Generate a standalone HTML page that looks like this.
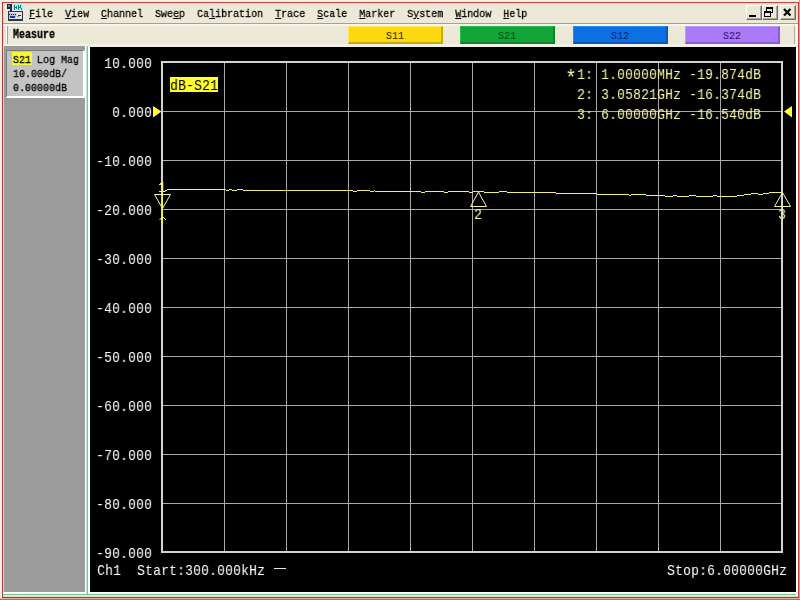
<!DOCTYPE html>
<html lang="en">
<head>
<meta charset="utf-8">
<title>Network Analyzer</title>
<style>
html,body{margin:0;padding:0;}
body{width:800px;height:600px;overflow:hidden;position:relative;background:#ece9d8;
  font-family:"Liberation Mono","DejaVu Sans Mono",monospace;}
.abs{position:absolute;}
.t12,.t16{will-change:transform;}
/* outer frame */
#frameouter{left:0;top:0;width:800px;height:600px;background:#f3f0e2;}
#framered{left:2px;top:2px;width:795px;height:594px;border:1px solid #c24545;border-bottom:2px solid #a43232;border-left-color:#a83a3a;background:#ece9d8;box-shadow:inset 0 0 2px 1px rgba(255,170,170,0.4);}
#edge-r{left:799px;top:0;width:1px;height:600px;background:#f28c8c;}
#edge-b1{left:0;top:598px;width:800px;height:1px;background:#d9b9a8;}
#edge-b2{left:0;top:599px;width:800px;height:1px;background:#8f7f60;}
/* menu */
.t12{font-size:11.5px;line-height:12px;white-space:pre;color:#000;-webkit-text-stroke:0.3px currentColor;transform:scaleX(0.8696);transform-origin:0 0;}
.t16{font-size:15px;line-height:16px;white-space:pre;transform:scaleX(0.8889);transform-origin:0 0;}
#menu{left:29px;top:8px;height:12px;}
#menu u{text-decoration:underline;text-decoration-thickness:1px;text-underline-offset:1px;}
#sep1{left:3px;top:23px;width:795px;height:1px;background:#a5a191;}
#sep2{left:3px;top:24px;width:795px;height:2px;background:#f8f6ec;}
#sep3{left:3px;top:44px;width:795px;height:3px;background:#f4f2e7;}
#grip1{left:6px;top:26px;width:1px;height:18px;background:#fff;}
#grip2{left:7px;top:26px;width:1px;height:18px;background:#a5a293;}
#tbend{left:794px;top:26px;width:1px;height:18px;background:#b3b09e;}
#measure{left:13px;top:29px;font-weight:bold;font-size:12.5px;transform:scaleX(0.8);}
.btn{top:26px;width:95px;height:18px;box-sizing:border-box;border-style:solid;border-width:1px 2px 2px 1px;}
.bt{top:30px;-webkit-text-stroke:0.1px currentColor;}
/* window buttons */
.wb{top:5px;width:16px;height:15px;box-sizing:border-box;background:#ece9d8;border:1px solid;border-color:#fff #716f64 #716f64 #fff;box-shadow:inset -1px -1px 0 #aca899;}
/* left panel */
#lpanel{left:4px;top:46px;width:81px;height:546px;background:#9b9b9b;}
#lbox{left:6px;top:50px;width:79px;height:48px;box-sizing:border-box;background:#c3c3c3;border-style:solid;border-width:1px 2px 2px 1px;border-color:#7d7d7d #fff #fff #7d7d7d;}
#lwhite{left:85px;top:46px;width:5px;height:550px;background:#fbfffb;}
#lgreen{left:86px;top:46px;width:1px;height:549px;background:#b4ecd0;}
#lgreen2{left:87px;top:46px;width:1px;height:549px;background:#72cc9c;}
#bwhite{left:3px;top:592px;width:795px;height:4px;background:#fbfffb;}
#bgreen{left:3px;top:594px;width:793px;height:1px;background:#72c696;}
#bgreen2{left:3px;top:595px;width:793px;height:1px;background:#d4f0d8;}
#rwhite{left:796px;top:24px;width:2px;height:572px;background:#fbfaf3;}
.w{color:#fff;}
.y{color:#f7f7a4;}
#plot{left:90px;top:47px;width:706px;height:545px;background:#000;}
</style>
</head>
<body>
<div class="abs" id="frameouter"></div>
<div class="abs" id="framered"></div>
<div class="abs" id="edge-r"></div>
<div class="abs" id="edge-b1"></div>
<div class="abs" id="edge-b2"></div>

<!-- app icon -->
<svg class="abs" style="left:7px;top:4px" width="17" height="17" viewBox="0 0 17 17" shape-rendering="crispEdges">
  <rect x="0" y="0" width="5" height="5" fill="#1a2348"/>
  <rect x="1" y="1" width="2" height="2" fill="#7d8db0"/>
  <rect x="3" y="3" width="2" height="4" fill="#1d2a5c"/>
  <rect x="6" y="0" width="10" height="6" fill="#a8f0f0"/>
  <g fill="#0c7f86">
    <rect x="7" y="1" width="1" height="5"/><rect x="9" y="2" width="1" height="3"/><rect x="8" y="3" width="1" height="1"/>
    <rect x="11" y="1" width="1" height="5"/><rect x="13" y="1" width="1" height="2"/><rect x="12" y="3" width="2" height="1"/><rect x="14" y="4" width="1" height="2"/>
  </g>
  <rect x="1" y="7" width="15" height="10" fill="#33363c"/>
  <rect x="2" y="8" width="13" height="7" fill="#dfe2ea"/>
  <rect x="2" y="9" width="7" height="5" fill="#b9bdf0"/>
  <path d="M2 10h1v1h-1zM4 10h1v1h-1zM6 10h1v1h-1zM8 10h1v1h-1z" fill="#23264a"/>
  <rect x="3" y="12" width="5" height="2" fill="#2236b0"/>
  <rect x="11" y="11" width="3" height="1" fill="#2c3a40"/>
  <rect x="10" y="12" width="2" height="1" fill="#8ea4a0"/>
</svg>

<div class="abs t12" id="menu"><u>F</u>ile  <u>V</u>iew  <u>C</u>hannel  Swe<u>e</u>p  Ca<u>l</u>ibration  <u>T</u>race  <u>S</u>cale  <u>M</u>arker  S<u>y</u>stem  <u>W</u>indow  <u>H</u>elp</div>

<!-- window buttons -->
<div class="abs wb" style="left:746px"><svg width="14" height="13" viewBox="0 0 14 13" style="display:block" shape-rendering="crispEdges"><rect x="2" y="9" width="7" height="2" fill="#000"/></svg></div>
<div class="abs wb" style="left:762px"><svg width="14" height="13" viewBox="0 0 14 13" style="display:block" shape-rendering="crispEdges"><path d="M3 1h7v6h-2v-1h1v-3h-5v2h-1z" fill="#000"/><path d="M1 5h7v6h-7zM2 7v3h5v-3z" fill="#000" fill-rule="evenodd"/></svg></div>
<div class="abs wb" style="left:780px"><svg width="14" height="13" viewBox="0 0 14 13" style="display:block"><path d="M3 3l6.5 6.5M9.5 3l-6.5 6.5" stroke="#000" stroke-width="2.2" fill="none"/></svg></div>

<div class="abs" id="sep1"></div>
<div class="abs" id="sep2"></div>
<div class="abs" id="sep3"></div>
<div class="abs" id="grip1"></div>
<div class="abs" id="grip2"></div>
<div class="abs" id="tbend"></div>
<div class="abs t12" id="measure">Measure</div>

<div class="abs btn" style="left:348px;background:#ffd90f;border-color:#ffe860 #c9a800 #c9a800 #ffe860"></div>
<div class="abs t12 bt" style="left:386px;color:#241c00">S11</div>
<div class="abs btn" style="left:460px;background:#12a436;border-color:#2fb850 #0b8528 #0b8528 #2fb850"></div>
<div class="abs t12 bt" style="left:498px;color:#064d16">S21</div>
<div class="abs btn" style="left:573px;background:#0c70e2;border-color:#2e88ee #0a58bc #0a58bc #2e88ee"></div>
<div class="abs t12 bt" style="left:611px;color:#0a2370">S12</div>
<div class="abs btn" style="left:685px;background:#a97af7;border-color:#be98fb #8a5ed6 #8a5ed6 #be98fb"></div>
<div class="abs t12 bt" style="left:723px;color:#2e1270">S22</div>

<!-- left panel -->
<div class="abs" id="lpanel"></div>
<div class="abs" id="lbox"></div>
<div class="abs" style="left:12px;top:52px;width:20px;height:13px;background:#f7f73c"></div>
<div class="abs t12" style="left:13px;top:54px">S21 Log Mag</div>
<div class="abs t12" style="left:12.5px;top:68px">10.000dB/</div>
<div class="abs t12" style="left:12.5px;top:82px">0.00000dB</div>
<div class="abs" id="lwhite"></div>
<div class="abs" id="bwhite"></div>
<div class="abs" id="lgreen"></div>
<div class="abs" id="lgreen2"></div>
<div class="abs" id="bgreen"></div>
<div class="abs" id="bgreen2"></div>
<div class="abs" id="rwhite"></div>

<!-- plot -->
<div class="abs" id="plot"></div>
<svg class="abs" style="left:90px;top:47px" width="706" height="545" viewBox="90 47 706 545" id="plotsvg">
  <g id="grid" shape-rendering="crispEdges">
    <g fill="#a9a9a9">
      <rect x="224" y="62" width="1" height="490"/><rect x="286" y="62" width="1" height="490"/><rect x="348" y="62" width="1" height="490"/>
      <rect x="410" y="62" width="1" height="490"/><rect x="472" y="62" width="1" height="490"/><rect x="534" y="62" width="1" height="490"/>
      <rect x="596" y="62" width="1" height="490"/><rect x="658" y="62" width="1" height="490"/><rect x="720" y="62" width="1" height="490"/>
      <rect x="162" y="111" width="620" height="1"/><rect x="162" y="160" width="620" height="1"/><rect x="162" y="209" width="620" height="1"/>
      <rect x="162" y="258" width="620" height="1"/><rect x="162" y="307" width="620" height="1"/><rect x="162" y="356" width="620" height="1"/>
      <rect x="162" y="405" width="620" height="1"/><rect x="162" y="454" width="620" height="1"/><rect x="162" y="503" width="620" height="1"/>
    </g>
    <rect x="162" y="62" width="620" height="490" fill="none" stroke="#d2d2d2" stroke-width="2"/>
  </g>
  <g id="refmarks" fill="#ffff2e">
    <path d="M153 106L161.5 111.5L153 117.5Z"/>
    <path d="M792 106L784 111.5L792 117.5Z"/>
  </g>
  <g id="trace" shape-rendering="crispEdges">
    <path d="M162 183h1v41h-1zM160 183h2v1h-2zM160 191h3v1h-3z" fill="#f0f050"/>
    <path d="M159.5 220L162.5 216.5L166 220" fill="none" stroke="#f0f070" shape-rendering="auto"/>
    <path d="M163 191h2v1h-2zM165 190h2v1h-2zM167 189h59v1h-59zM226 190h3v1h-3zM229 189h3v1h-3zM232 190h5v1h-5zM237 189h6v1h-6zM243 190h110v1h-110zM353 191h4v1h-4zM357 190h13v1h-13zM370 191h4v1h-4zM374 190h1v1h-1zM375 191h46v1h-46zM421 192h4v1h-4zM425 191h19v1h-19zM444 192h4v1h-4zM448 191h21v1h-21zM469 192h4v1h-4zM473 191h11v1h-11zM484 192h15v1h-15zM499 191h8v1h-8zM507 192h49v1h-49zM556 193h41v1h-41zM597 194h32v1h-32zM629 195h2v1h-2zM631 194h15v1h-15zM646 195h19v1h-19zM665 196h8v1h-8zM673 195h4v1h-4zM677 196h12v1h-12zM689 195h7v1h-7zM696 196h17v1h-17zM713 195h4v1h-4zM717 196h20v1h-20zM737 195h7v1h-7zM744 194h7v1h-7zM751 193h7v1h-7zM758 194h5v1h-5zM763 193h6v1h-6zM769 192h14v1h-14z" fill="#eeee78"/>
  </g>
  <g id="markers" fill="none" stroke="#f6f6a6" stroke-width="1">
    <path d="M154.5 194.5H170.5L162.5 208.5Z"/>
    <path d="M478.5 192L470.5 206.5H486.5Z"/>
    <path d="M782.5 192.5L774.5 206.5H790.5Z"/>
  </g>
</svg>
<!-- y axis labels -->
<div class="abs t16 w" style="left:104px;top:57px">10.000</div>
<div class="abs t16 w" style="left:112px;top:106px">0.000</div>
<div class="abs t16 w" style="left:96px;top:155px">-10.000</div>
<div class="abs t16 w" style="left:96px;top:204px">-20.000</div>
<div class="abs t16 w" style="left:96px;top:253px">-30.000</div>
<div class="abs t16 w" style="left:96px;top:302px">-40.000</div>
<div class="abs t16 w" style="left:96px;top:351px">-50.000</div>
<div class="abs t16 w" style="left:96px;top:400px">-60.000</div>
<div class="abs t16 w" style="left:96px;top:449px">-70.000</div>
<div class="abs t16 w" style="left:96px;top:498px">-80.000</div>
<div class="abs t16 w" style="left:96px;top:547px">-90.000</div>
<!-- trace label -->
<div class="abs" style="left:170px;top:77px;width:48px;height:15px;background:#ffff2e"></div>
<div class="abs t16" style="left:170px;top:78.5px;color:#000">dB-S21</div>
<!-- marker readout -->
<div class="abs t16 y" style="left:565px;top:68.5px;font-size:22px;line-height:22px">*</div>
<div class="abs t16 y" style="left:577px;top:68px">1: 1.00000MHz -19.874dB</div>
<div class="abs t16 y" style="left:577px;top:88px">2: 3.05821GHz -16.374dB</div>
<div class="abs t16 y" style="left:577px;top:108px">3: 6.00000GHz -16.540dB</div>
<!-- marker labels -->
<div class="abs t16 y" style="left:158px;top:181px">1</div>
<div class="abs t16 y" style="left:474px;top:208px">2</div>
<div class="abs t16 y" style="left:778px;top:208px">3</div>
<!-- bottom status -->
<div class="abs t16 w" style="left:97px;top:564px">Ch1  Start:300.000kHz</div>
<div class="abs" style="left:274px;top:568px;width:12px;height:1px;background:#eeeeb8"></div>
<div class="abs t16 w" style="left:667px;top:564px">Stop:6.00000GHz</div>
</body>
</html>
